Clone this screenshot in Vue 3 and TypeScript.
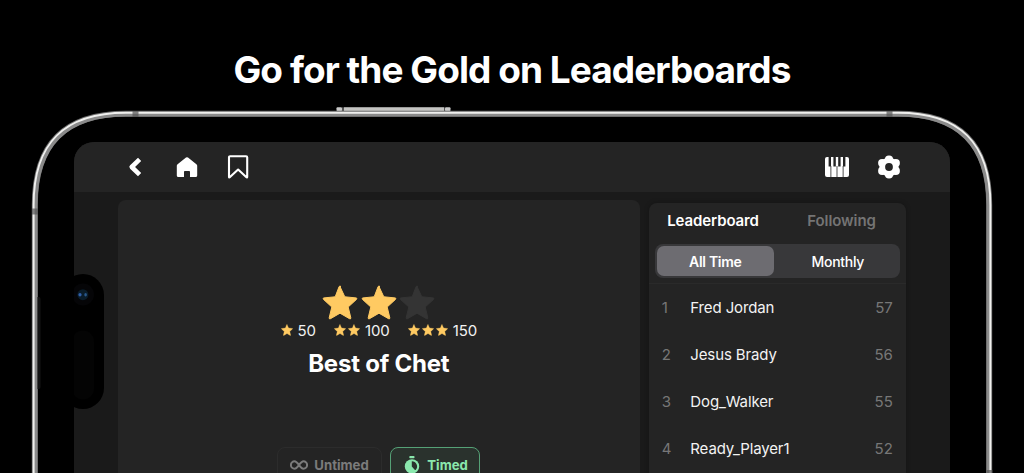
<script setup lang="ts">
import { ref } from "vue";

interface Player {
  name: string;
  score: number;
}

const players: Player[] = [
  { name: "Fred Jordan", score: 57 },
  { name: "Jesus Brady", score: 56 },
  { name: "Dog_Walker", score: 55 },
  { name: "Ready_Player1", score: 52 },
];

const goals = [
  { stars: 1, points: 50 },
  { stars: 2, points: 100 },
  { stars: 3, points: 150 },
];

const earned = 2;
const period = ref<"all" | "month">("all");
const timed = ref(true);

const starPath =
  "M18 1.6 L22.8 11.8 L34 12.9 Q35.6 13.1 34.5 14.4 L26.2 22 L28.8 32.8 Q29 34.4 27.5 33.7 L18 28.2 L8.5 33.7 Q7 34.4 7.2 32.8 L9.8 22 L1.5 14.4 Q.4 13.1 2 12.9 L13.2 11.8 L17.1 1.6 Q18 .2 18.9 1.6 Z";
</script>

<template>
  <main class="promo">
    <h1>Go for the Gold on Leaderboards</h1>

    <svg class="phone-frame" viewBox="0 0 1024 473" aria-hidden="true">
      <rect x="336.5" y="107.3" width="5.5" height="4" rx="1" fill="#c9c9c9" />
      <rect x="342" y="107.3" width="103" height="4" fill="#555" />
      <rect x="344" y="107.3" width="100" height="4" fill="#c4c4c2" />
      <rect x="445" y="107.3" width="5.5" height="4" rx="1" fill="#c9c9c9" />
      <g fill="none">
        <path
          d="M34.8 480V205C34.8 144 65 113.8 126 113.8H898C959 113.8 989.2 144 989.2 205V480"
          stroke="#6c6c6c"
          stroke-width="6"
        />
        <path
          d="M35.7 480V205C35.7 145 66 114.7 126 114.7H898C958 114.7 988.3 145 988.3 205V480"
          stroke="#8a8a8a"
          stroke-width="3.5"
        />
        <path
          d="M33.6 480V205C33.6 143 64 112.7 126 112.7H898C960 112.7 990.4 143 990.4 205V480"
          stroke="#f0f0ee"
          stroke-width="2"
        />
      </g>
      <g fill="#555" fill-opacity=".7">
        <path d="M132.5 111h6v6h-6zM886.5 111h6v6h-6zM32 208.5h6v6h-6zM986.5 470h6v6h-6z" />
      </g>
      <path d="M37.5 297h1.5q1.5 0 1.5 2v88q0 2-1.5 2h-1.5z" fill="#141414" />
    </svg>

    <div class="screen">
      <header class="toolbar">
        <button type="button" class="tool back" aria-label="Back">
          <svg viewBox="0 0 24 24">
            <path
              d="M16.6 4.4L8.7 12l7.9 7.6"
              fill="none"
              stroke="#fff"
              stroke-width="4.6"
              stroke-linejoin="round"
            />
          </svg>
        </button>
        <button type="button" class="tool home" aria-label="Home">
          <svg viewBox="0 0 24 24">
            <path
              d="M12 2.2q.5 0 1 .4l8.4 6.6q.8.6.8 1.6v9.7q0 1.6-1.6 1.6H15v-5.3q0-.9-.9-.9H9.9q-.9 0-.9.9v5.3H3.4q-1.6 0-1.6-1.6v-9.7q0-1 .8-1.6L11 2.6q.5-.4 1-.4z"
              fill="#fff"
            />
          </svg>
        </button>
        <button type="button" class="tool bookmark" aria-label="Bookmark">
          <svg viewBox="0 0 24 24">
            <path
              d="M4.1 1.2h16q1.1 0 1.1 1.1v19.5q0 1.3-1 .3l-8.1-7.6-8.1 7.6q-1 1-1-.3V2.3q0-1.1 1.1-1.1z"
              fill="none"
              stroke="#fff"
              stroke-width="2.1"
              stroke-linejoin="round"
            />
          </svg>
        </button>
        <span class="spacer" />
        <button type="button" class="tool piano" aria-label="Keyboard">
          <svg viewBox="0 0 24 20">
            <rect width="24" height="20" rx="2" fill="#fff" />
            <g fill="#242424">
              <path d="M3.6 0h2.4v9.6H3.6zM8.4 0h2.4v9.6H8.4zM13.2 0h2.4v9.6h-2.4zM18 0h2.4v9.6H18z" />
              <path d="M5.5 9h.8v11h-.8zM11.6 9h.8v11h-.8zM17.7 9h.8v11h-.8z" />
            </g>
          </svg>
        </button>
        <button type="button" class="tool gear" aria-label="Settings">
          <svg viewBox="0 0 24 24">
            <g fill="#fff">
              <circle cx="12" cy="12" r="9.6" />
              <circle cx="12" cy="4.6" r="4.1" />
              <circle cx="12" cy="19.4" r="4.1" />
              <circle cx="5.2" cy="8.1" r="4.1" />
              <circle cx="18.8" cy="8.1" r="4.1" />
              <circle cx="5.2" cy="15.9" r="4.1" />
              <circle cx="18.8" cy="15.9" r="4.1" />
            </g>
            <circle cx="12" cy="12" r="3.9" fill="#242424" />
          </svg>
        </button>
      </header>

      <div class="content">
        <section class="result">
          <div class="rating">
            <svg
              v-for="n in 3"
              :key="n"
              viewBox="0 0 36 35"
              :class="{ empty: n > earned }"
            >
              <path :d="starPath" />
            </svg>
          </div>
          <ul class="goals">
            <li v-for="goal in goals" :key="goal.stars">
              <span class="goal-stars">
                <svg v-for="n in goal.stars" :key="n" viewBox="0 0 36 35">
                  <path :d="starPath" />
                </svg>
              </span>
              <span class="points">{{ goal.points }}</span>
            </li>
          </ul>
          <h2>Best of Chet</h2>
          <div class="modes">
            <button
              type="button"
              class="mode untimed"
              :class="{ active: !timed }"
              @click="timed = false"
            >
              <svg viewBox="0 0 18 10">
                <path
                  d="M9 5C7.3 2.8 6.3 1.3 4.6 1.3a3.6 3.6 0 0 0 0 7.4C6.3 8.7 7.3 7.2 9 5s2.7-3.7 4.4-3.7a3.6 3.6 0 0 1 0 7.4C11.7 8.7 10.7 7.2 9 5z"
                  fill="none"
                  stroke="currentColor"
                  stroke-width="2"
                />
              </svg>
              <span>Untimed</span>
            </button>
            <button
              type="button"
              class="mode timed"
              :class="{ active: timed }"
              @click="timed = true"
            >
              <svg viewBox="0 0 16 18">
                <rect x="5.3" y="0" width="5.2" height="2.3" rx=".8" fill="currentColor" />
                <circle cx="8" cy="10.4" r="7.2" fill="currentColor" />
                <path d="M7.8 5.2a5.2 5.2 0 0 1 4 8.6Q11.3 14.4 10.7 13.8L7.8 10.4z" fill="#2a322d" />
              </svg>
              <span>Timed</span>
            </button>
          </div>
        </section>

        <aside class="leaderboard">
          <nav class="tabs">
            <span class="tab current">Leaderboard</span>
            <span class="tab following">Following</span>
          </nav>
          <div class="segments">
            <button
              type="button"
              :class="{ selected: period === 'all' }"
              @click="period = 'all'"
            >
              All Time
            </button>
            <button
              type="button"
              :class="{ selected: period === 'month' }"
              @click="period = 'month'"
            >
              Monthly
            </button>
          </div>
          <ol class="ranking">
            <li v-for="(player, index) in players" :key="player.name">
              <span class="rank">{{ index + 1 }}</span>
              <span class="name">{{ player.name }}</span>
              <span class="score">{{ player.score }}</span>
            </li>
          </ol>
        </aside>
      </div>

      <!-- camera cutout lies over the left edge of the display -->
      <div class="island">
        <svg viewBox="0 0 42 135" aria-hidden="true">
          <rect x="10" y="9.5" width="22" height="22" rx="11" fill="#050507" />
          <circle cx="20.9" cy="20.7" r="5.5" fill="#0a1c29" />
          <ellipse cx="18" cy="20.7" rx="1.6" ry="1.8" fill="#2f5ea8" />
          <ellipse cx="23.6" cy="20.7" rx="1.3" ry="1.8" fill="#28588c" />
          <rect x="10" y="56.5" width="22" height="69" rx="11" fill="#040404" />
        </svg>
      </div>
    </div>
  </main>
</template>

<style>
body {
  background: #000;
  overflow: hidden;
}
</style>

<style scoped>
.promo {
  position: relative;
  display: flex;
  flex-direction: column;
  align-items: center;
  box-sizing: border-box;
  width: 1024px;
  height: 473px;
  padding-top: 46px;
  overflow: hidden;
  color: #fff;
  background: #000;
  font-family: Inter, "Liberation Sans", sans-serif;
}

h1 {
  flex: none;
  height: 48px;
  margin: 0 0 47.6px;
  font-size: 37px;
  font-weight: 700;
  line-height: 47px;
  letter-spacing: -0.94px;
  white-space: nowrap;
}

.phone-frame {
  position: absolute;
  inset: 0;
  width: 1024px;
  height: 473px;
}

.screen {
  position: relative;
  flex: none;
  width: 875.4px;
  height: 340px;
  overflow: hidden;
  border-radius: 20px 20px 0 0;
  background: #1a1a1a;
}

button {
  padding: 0;
  border: 0;
  color: inherit;
  background: none;
  font: inherit;
}

svg {
  display: block;
}

.toolbar {
  display: flex;
  align-items: center;
  box-sizing: border-box;
  height: 50.4px;
  padding: 0 48.5px;
  background: #242424;
}

.tool {
  display: grid;
  place-items: center;
  width: 25px;
  height: 25px;
}

.tool svg {
  width: 24px;
  height: 24px;
}

.home,
.bookmark,
.gear {
  margin-left: 26.5px;
}

.tool.piano svg {
  height: 20px;
}

.spacer {
  flex: 1;
}

.content {
  display: flex;
  align-items: flex-start;
  gap: 9px;
  padding: 8.5px 43.5px 0;
}

.result {
  display: flex;
  flex-direction: column;
  align-items: center;
  box-sizing: border-box;
  width: 522px;
  height: 300px;
  padding-top: 85px;
  border-radius: 8px;
  background: #242424;
}

.rating {
  display: flex;
  gap: 2.6px;
}

.rating svg {
  width: 36px;
  height: 35px;
  fill: #ffca62;
  stroke: #ffca62;
}

.rating svg.empty {
  fill: #343434;
  stroke: #343434;
}

.goals {
  display: flex;
  gap: 18px;
  margin: 0;
  padding: 0;
  list-style: none;
}

.goals li,
.goal-stars {
  display: flex;
  align-items: center;
}

.goals li {
  gap: 5px;
  height: 20px;
  font-size: 15px;
}

.goal-stars {
  gap: 2px;
}

.goal-stars svg {
  width: 12px;
  height: 12px;
  fill: #ffca62;
  stroke: #ffca62;
}

.points {
  color: #f2f2f2;
  letter-spacing: -0.1px;
}

h2 {
  margin: 8.5px 0 0;
  font-size: 24px;
  font-weight: 700;
  line-height: 30px;
  letter-spacing: -0.22px;
}

.modes {
  display: flex;
  gap: 8px;
  margin-top: 68.5px;
}

.mode {
  display: flex;
  align-items: center;
  box-sizing: border-box;
  height: 35px;
  border: 1px solid #2c2c2c;
  border-radius: 8px;
  color: #7b7b7b;
  font-size: 13.2px;
  font-weight: 700;
}

.mode.active {
  border-color: #55a176;
  color: #8ae8ad;
  background: #2a322d;
}

.untimed {
  width: 105px;
  gap: 6px;
  padding-left: 12px;
}

.untimed svg {
  width: 18px;
  height: 10px;
}

.timed {
  width: 90px;
  gap: 7px;
  padding-left: 13px;
}

.timed svg {
  width: 16px;
  height: 18px;
}

.leaderboard {
  flex: none;
  box-sizing: border-box;
  width: 257px;
  height: 300px;
  margin-top: 2.5px;
  border-radius: 8px;
  background: #242424;
  box-shadow: 0 0 5px rgb(0 0 0 / 25%);
}

.tabs {
  display: flex;
  height: 35px;
  font-size: 15px;
  font-weight: 600;
  line-height: 35px;
  letter-spacing: -0.1px;
}

.tab {
  flex: 1;
  text-align: center;
}

.following {
  color: #747474;
}

.segments {
  display: flex;
  box-sizing: border-box;
  width: 245px;
  height: 34px;
  margin: 6.5px 6px 4.2px;
  padding: 2px;
  border-radius: 8px;
  background: #38383a;
}

.segments button {
  flex: 1;
  padding-left: 4px;
  border-radius: 7px;
  font-size: 14px;
  font-weight: 500;
  letter-spacing: -0.3px;
}

.segments .selected {
  flex: 0 0 117px;
  padding-left: 0;
  background: #6d6c71;
  font-weight: 600;
}

.ranking {
  margin: 0;
  padding: 0;
  border-top: 1px solid #2a2a2a;
  list-style: none;
}

.ranking li {
  display: flex;
  align-items: center;
  height: 47.2px;
  padding: 0 13px;
  font-size: 15px;
}

.rank {
  width: 28.5px;
  color: #777;
}

.name {
  flex: 1;
  color: #f3f3f3;
  letter-spacing: -0.12px;
}

.score {
  color: #777;
}

.island {
  position: absolute;
  top: 132.5px;
  left: -12px;
  width: 42px;
  height: 135px;
  border-radius: 21px;
  background: #000;
}
</style>
